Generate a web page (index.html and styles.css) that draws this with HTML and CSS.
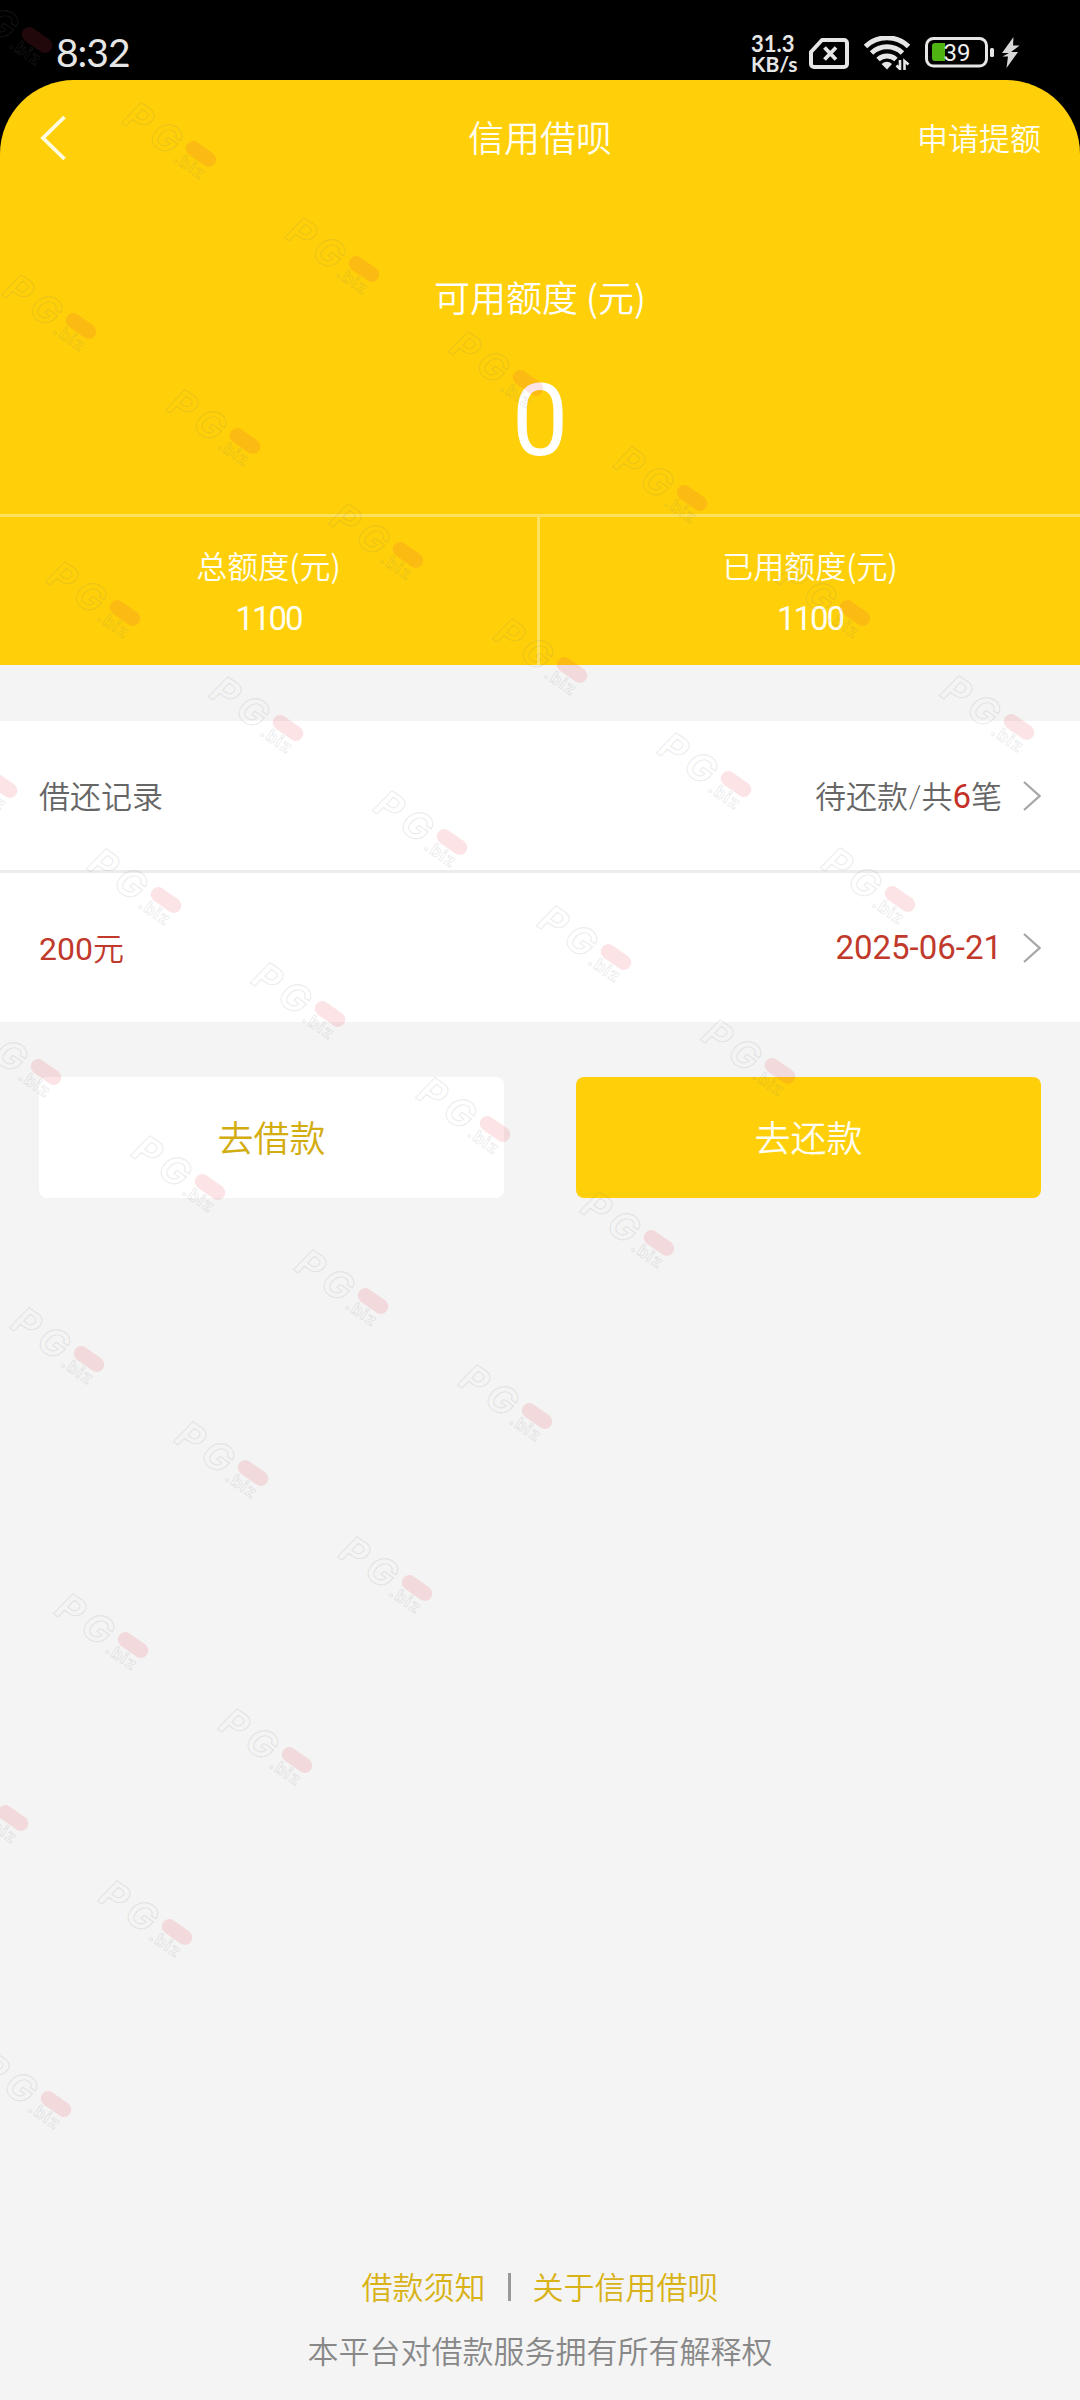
FILE: index.html
```html
<!DOCTYPE html>
<html lang="zh-CN">
<head>
<meta charset="utf-8">
<title>信用借呗</title>
<link rel="stylesheet" href="styles.css">
</head>
<body>
<div class="screen">
  <div class="status">
    <div class="clock">8:32</div>
    <div class="speed"><span>31.3</span><span class="unit">KB/s</span></div>
    <svg class="sim" width="40" height="32" viewBox="0 0 40 32"><path d="M13 2H35a3 3 0 0 1 3 3V26a3 3 0 0 1-3 3H5a3 3 0 0 1-3-3V14Z" fill="none" stroke="#e6e6e6" stroke-width="4" stroke-linejoin="round"/><path d="M15.500 9.500 27 21.500M27 9.500 15.500 21.500" stroke="#e6e6e6" stroke-width="3.800"/></svg>
    <svg class="wifi" width="46" height="34" viewBox="0 0 46 34"><g fill="none" stroke="#e6e6e6" stroke-width="5"><path d="M1.500 10.500A31 31 0 0 1 44.500 10.500"/><path d="M7.500 17A22.500 22.500 0 0 1 38.500 17"/><path d="M14 23.500A13.500 13.500 0 0 1 32 23.500"/></g><path d="M17.500 28Q23 23.500 28 28L23 33.500Z" fill="#e6e6e6"/><path d="M36 24V33L32.500 29.500M40.500 34V25L44.500 28.500" fill="none" stroke="#e6e6e6" stroke-width="2.600"/></svg>
    <svg class="battery" width="69" height="31" viewBox="0 0 69 31"><rect x="1.500" y="1.500" width="60" height="27.500" rx="7" fill="none" stroke="#e6e6e6" stroke-width="3"/><path d="M20 6H10a3 3 0 0 0-3 3V21a3 3 0 0 0 3 3H20Z" fill="#4fb312"/><rect x="65" y="11" width="4" height="9" rx="1.500" fill="#e6e6e6"/><text x="32" y="24" text-anchor="middle" class="level">39</text></svg>
    <svg class="bolt" width="19" height="31" viewBox="0 0 19 31"><path d="M12.500 0 1 16H8L1.500 19.500H7L5.500 31 17 15H10L18.500 8.500H12Z" fill="#d8d8d8"/></svg>
  </div>

  <header class="hero">
    <nav class="nav">
      <svg width="28" height="48" viewBox="0 0 28 48"><path d="M25.500 3 4 24 25.500 45" fill="none" stroke="#fffce0" stroke-width="3.800"/></svg>
      <h1 class="title">信用借呗</h1>
      <a class="raise">申请提额</a>
    </nav>
    <div class="available">可用额度 (元)</div>
    <div class="amount">0</div>
    <div class="totals">
      <div class="total"><span>总额度(元)</span><span class="value">1100</span></div>
      <div class="total"><span>已用额度(元)</span><span class="value">1100</span></div>
    </div>
  </header>

  <section class="records">
    <div class="row">
      <span class="label">借还记录</span>
      <span class="info">待还款/共<b class="count">6</b>笔</span>
      <svg class="chev" width="18" height="30" viewBox="0 0 18 30"><path d="M1 1 16.500 15 1 29" fill="none" stroke="#a6a6a6" stroke-width="2.200"/></svg>
    </div>
    <div class="row due">
      <span class="label"><span class="num">200</span>元</span>
      <span class="info date">2025-06-21</span>
      <svg class="chev" width="18" height="30" viewBox="0 0 18 30"><path d="M1 1 16.500 15 1 29" fill="none" stroke="#a6a6a6" stroke-width="2.200"/></svg>
    </div>
  </section>

  <div class="actions">
    <button class="btn">去借款</button>
    <button class="btn primary">去还款</button>
  </div>

  <footer class="footer">
    <div class="links"><a>借款须知</a><i class="bar"></i><a>关于信用借呗</a></div>
    <div class="note">本平台对借款服务拥有所有解释权</div>
  </footer>

  <svg class="marks" width="1080" height="2400" viewBox="0 0 1080 2400" aria-hidden="true">
    <defs>
      <g id="mark" transform="rotate(35)">
        <text class="mark-name" x="-84" y="20">PG</text>
        <rect x="-17" y="-7.500" width="34" height="15" rx="7.500" fill="#e8404c" fill-opacity=".14"/>
        <text class="mark-tld" x="-20" y="22">.biz</text>
      </g>
    </defs>
    <use href="#mark" x="37" y="40"/><use href="#mark" x="201" y="154"/><use href="#mark" x="364" y="269"/><use href="#mark" x="528" y="383"/><use href="#mark" x="692" y="498"/><use href="#mark" x="855" y="613"/><use href="#mark" x="1019" y="727"/>
    <use href="#mark" x="81" y="326"/><use href="#mark" x="245" y="441"/><use href="#mark" x="408" y="555"/><use href="#mark" x="572" y="670"/><use href="#mark" x="736" y="784"/><use href="#mark" x="900" y="899"/>
    <use href="#mark" x="125" y="613"/><use href="#mark" x="288" y="728"/><use href="#mark" x="452" y="842"/><use href="#mark" x="616" y="957"/><use href="#mark" x="780" y="1071"/>
    <use href="#mark" x="2" y="785"/><use href="#mark" x="166" y="900"/><use href="#mark" x="330" y="1014"/><use href="#mark" x="495" y="1129"/><use href="#mark" x="659" y="1243"/>
    <use href="#mark" x="46" y="1072"/><use href="#mark" x="210" y="1187"/><use href="#mark" x="373" y="1301"/><use href="#mark" x="537" y="1416"/>
    <use href="#mark" x="89" y="1359"/><use href="#mark" x="253" y="1473"/><use href="#mark" x="417" y="1588"/>
    <use href="#mark" x="133" y="1645"/><use href="#mark" x="297" y="1760"/>
    <use href="#mark" x="13" y="1818"/><use href="#mark" x="177" y="1932"/>
    <use href="#mark" x="56" y="2104"/>
  </svg>
</div>
</body>
</html>
```
FILE: styles.css
```css
* { box-sizing: border-box; }
body { margin: 0; background: #000; }
.screen {
  position: relative;
  width: 1080px;
  height: 2400px;
  overflow: hidden;
  display: flex;
  flex-direction: column;
  background: linear-gradient(#000 0 300px, #f4f4f4 300px);
  font-family: Lato, "Noto Sans CJK SC", sans-serif;
  font-weight: 350;
  font-size: 31px;
  color: #666;
}

.status {
  height: 80px;
  padding: 0 60px 0 56px;
  display: flex;
  align-items: flex-start;
  color: #e6e6e6;
}
.clock { margin-right: auto; padding-top: 32px; font-size: 39px; line-height: 40px; font-weight: 400; letter-spacing: -1px; }
.speed { width: 58px; padding-top: 34px; display: flex; flex-direction: column; font-size: 22px; line-height: 20px; font-weight: 700; }
.speed .unit { font-size: 21px; }
.sim { margin: 38px 15px 0 0; }
.wifi { margin: 36px 15px 0 0; }
.battery { margin: 37px 7px 0 0; }
.bolt { margin-top: 37px; }
.level { font: 400 24px Roboto, sans-serif; fill: #f0f0f0; }

.hero {
  height: 585px;
  display: flex;
  flex-direction: column;
  align-items: stretch;
  text-align: center;
  border-radius: 74px 74px 0 0;
  background: #ffd009;
  color: #fffef0;
}
.nav {
  height: 116px;
  padding: 0 39px;
  display: grid;
  grid-template-columns: 1fr auto 1fr;
  align-items: center;
}
.title { margin: 0; padding-bottom: 1px; font-size: 36px; font-weight: 350; line-height: 40px; }
.raise { justify-self: end; padding-bottom: 3px; }
.available { margin-top: 80px; font-size: 36px; line-height: 40px; color: #fff; font-family: "Noto Sans CJK SC", sans-serif; }
.amount { margin-top: 45px; height: 120px; font-family: Roboto, sans-serif; font-size: 100px; line-height: 120px; color: #fff; font-weight: 400; }
.totals {
  margin-top: auto;
  height: 151px;
  display: grid;
  grid-template-columns: 540px 540px;
  border-top: 3px solid #ffe160;
}
.total { padding-top: 28px; display: flex; flex-direction: column; line-height: 40px; gap: 14px; font-family: "Noto Sans CJK SC", sans-serif; }
.total:first-child { border-right: 3px solid #ffe160; }
.value, .date, .num, .count { font-family: Roboto, sans-serif; font-weight: 400; }
.value { font-size: 33px; letter-spacing: -2px; }

.records { margin-top: 56px; background: #fff; }
.row {
  height: 152px;
  padding: 0 39px;
  display: flex;
  align-items: center;
}
.row:first-child { border-bottom: 3px solid #ececec; }
.row.due { height: 149px; color: #c0392b; }
.label { padding-bottom: 3px; }
.info { margin-left: auto; padding-bottom: 3px; }
.count { font-size: 33px; color: #c62f26; }
.date { font-size: 33px; padding-bottom: 0; }
.num { font-size: 32px; }
.chev { margin-left: 21px; }

.actions { margin-top: 55px; padding: 0 39px; display: grid; grid-template-columns: 1fr 1fr; gap: 72px; }
.btn {
  height: 121px;
  padding: 0 0 4px;
  border: 0;
  border-radius: 8px;
  background: #fff;
  color: #d3ac10;
  font: inherit;
  font-size: 36px;
}
.btn.primary { background: #ffd009; color: #fffef0; }

.footer { margin-top: auto; padding-bottom: 29px; display: flex; flex-direction: column; align-items: center; gap: 24px; line-height: 40px; color: #888; }
.links { display: flex; align-items: center; color: #d8b216; }
.bar { width: 3px; height: 28px; margin: 0 22px; background: #999; }

.marks { position: absolute; left: 0; top: 0; pointer-events: none; }
.mark-name, .mark-tld { fill: none; stroke: #777; stroke-opacity: .15; font-family: Inter, sans-serif; font-weight: 700; }
.mark-name { font-size: 38px; font-style: italic; letter-spacing: 7px; stroke-width: 1.200px; }
.mark-tld { font-size: 17px; letter-spacing: 1px; stroke-width: 1px; }
```
